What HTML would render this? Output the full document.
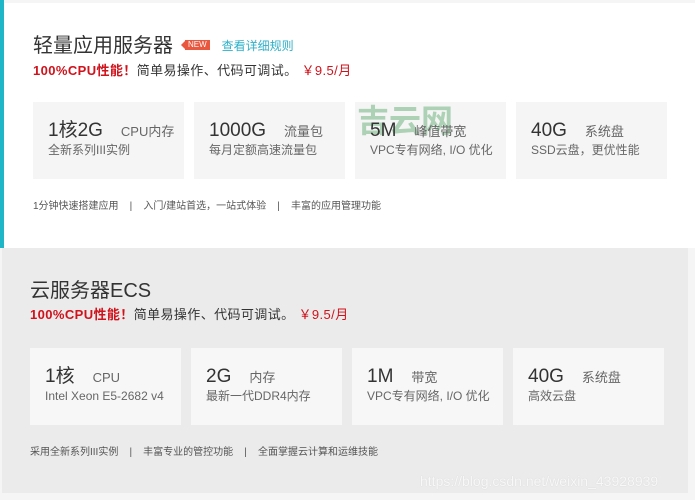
<!DOCTYPE html>
<html><head><meta charset="utf-8"><style>
*{margin:0;padding:0;box-sizing:border-box}
body{width:695px;height:500px;background:#f5f5f5;font-family:"Liberation Sans","Noto Sans CJK SC",sans-serif;position:relative;overflow:hidden;color:#333}
.a{position:absolute}
.top{left:0;top:3px;width:695px;height:245px;background:#fff}
.bar{left:0;top:0;width:4px;height:248px;background:#1fb6c8}
.bot{left:2px;top:248px;width:686px;height:245px;background:#ebebeb}
.card{position:absolute;width:151px;height:77px}
.top .card{background:#f5f5f5}
.bot .card{background:#f7f7f7}
.big{position:absolute;left:15px;top:17px;font-size:19px;line-height:24px;color:#333;white-space:nowrap}
.big span{font-size:13px;color:#666;margin-left:18px}
.sm{position:absolute;left:15px;top:40px;font-size:12px;line-height:16px;color:#666;white-space:nowrap}
.h{font-size:20px;line-height:26px;color:#333;white-space:nowrap}
.sub{font-size:13px;line-height:18px;color:#333;white-space:nowrap;letter-spacing:0.4px}
.sub b{color:#d0121b}
.sub i{font-style:normal;color:#d0121b;margin-left:4px}
.ft{font-size:10px;color:#555;white-space:nowrap}
.new{display:inline-block;background:#e8573e;color:#fff;font-size:8px;line-height:10px;padding:0 3px;vertical-align:middle;position:relative;margin-left:12px;top:-2px}
.new:before{content:"";position:absolute;left:-4px;top:1px;border:4px solid transparent;border-right:4px solid #e8573e;border-left:0}
</style></head><body>
<div class="a top">
  <div class="a h" style="left:33px;top:30px">轻量应用服务器<span class="new">NEW</span><span style="font-size:12px;color:#2fb0c8;margin-left:12px;vertical-align:2px">查看详细规则</span></div>
  <div class="a sub" style="left:33px;top:59px"><b>100%CPU性能！</b>简单易操作、代码可调试。<i>￥9.5/月</i></div>
  <div class="card" style="left:33px;top:99px"><div class="big">1核2G<span>CPU内存</span></div><div class="sm">全新系列III实例</div></div>
  <div class="card" style="left:194px;top:99px"><div class="big">1000G<span>流量包</span></div><div class="sm">每月定额高速流量包</div></div>
  <div class="card" style="left:355px;top:99px"><div class="a" style="left:2px;top:-6px;font-size:32px;color:#9cc9a6;opacity:.8;white-space:nowrap;font-weight:bold">吉云网</div><div class="big">5M<span>峰值带宽</span></div><div class="sm">VPC专有网络, I/O 优化</div></div>
  <div class="card" style="left:516px;top:99px"><div class="big">40G<span>系统盘</span></div><div class="sm">SSD云盘，更优性能</div></div>
  <div class="a ft" style="left:33px;top:194px">1分钟快速搭建应用 &nbsp; &nbsp;| &nbsp; &nbsp;入门/建站首选，一站式体验 &nbsp; &nbsp;| &nbsp; &nbsp;丰富的应用管理功能</div>
</div>
<div class="a bar"></div>
<div class="a bot">
  <div class="a h" style="left:28px;top:30px">云服务器ECS</div>
  <div class="a sub" style="left:28px;top:58px"><b>100%CPU性能！</b>简单易操作、代码可调试。<i>￥9.5/月</i></div>
  <div class="card" style="left:28px;top:100px"><div class="big">1核<span>CPU</span></div><div class="sm">Intel Xeon E5-2682 v4</div></div>
  <div class="card" style="left:189px;top:100px"><div class="big">2G<span>内存</span></div><div class="sm">最新一代DDR4内存</div></div>
  <div class="card" style="left:350px;top:100px"><div class="big">1M<span>带宽</span></div><div class="sm">VPC专有网络, I/O 优化</div></div>
  <div class="card" style="left:511px;top:100px"><div class="big">40G<span>系统盘</span></div><div class="sm">高效云盘</div></div>
  <div class="a ft" style="left:28px;top:195px">采用全新系列III实例 &nbsp; &nbsp;| &nbsp; &nbsp;丰富专业的管控功能 &nbsp; &nbsp;| &nbsp; &nbsp;全面掌握云计算和运维技能</div>
  <div class="a" style="left:418px;top:225px;font-size:14px;color:#f8f8f8;text-shadow:0 0 1px #ccc;white-space:nowrap">https://blog.csdn.net/weixin_43928939</div>
</div>
</body></html>
